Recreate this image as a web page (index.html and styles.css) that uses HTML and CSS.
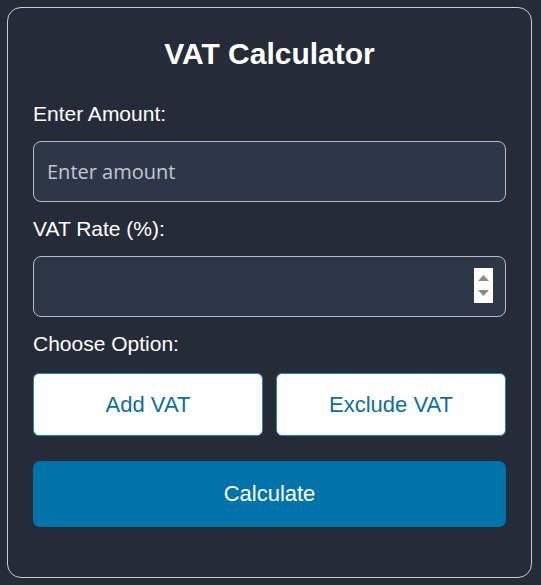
FILE: index.html
```html
<!DOCTYPE html>
<html lang="en">
<head>
<meta charset="utf-8">
<title>VAT Calculator</title>
<link rel="stylesheet" href="styles.css">
</head>
<body>
<div class="card">
  <h1 class="title">VAT Calculator</h1>
  <label class="label" for="amount">Enter Amount:</label>
  <input class="field" id="amount" type="text" placeholder="Enter amount">
  <label class="label" for="rate">VAT Rate (%):</label>
  <div class="field-wrap">
    <input class="field" id="rate" type="text">
    <span class="spinner">
      <svg width="19" height="35" viewBox="0 0 19 35">
        <rect width="19" height="35" fill="#ffffff"/>
        <path d="M4 13 L9.5 7 L15 13 Z" fill="#8a8a8a"/>
        <path d="M4 22 L15 22 L9.5 28 Z" fill="#8a8a8a"/>
      </svg>
    </span>
  </div>
  <div class="label">Choose Option:</div>
  <div class="options">
    <button class="opt">Add VAT</button>
    <button class="opt">Exclude VAT</button>
  </div>
  <button class="calc">Calculate</button>
</div>
</body>
</html>
```
FILE: styles.css
```css
html, body {
  margin: 0;
  padding: 0;
  background: #262b38;
}
body {
  padding: 7px;
  font-family: "Liberation Sans", Arial, sans-serif;
  color: #ffffff;
}
.card {
  box-sizing: border-box;
  width: 525px;
  height: 571px;
  border: 1px solid #c9ccd2;
  border-radius: 14px;
  padding: 29px 25px 25px;
  display: flex;
  flex-direction: column;
}
.title {
  margin: 0 0 31px;
  font-size: 30px;
  font-weight: bold;
  text-align: center;
  line-height: 34px;
}
.label {
  display: block;
  font-size: 21px;
  line-height: 24px;
  margin-bottom: 15px;
}
.field {
  box-sizing: border-box;
  width: 473px;
  height: 61px;
  margin: 0 0 15px;
  border: 1px solid #b8bec8;
  border-radius: 8px;
  background: #2e3748;
  color: #ffffff;
  padding: 0 13px;
  font-family: "Open Sans", "Noto Sans", sans-serif;
  font-size: 20px;
  outline: none;
}
.field::placeholder {
  color: #c3c8d0;
}
.field-wrap {
  position: relative;
  width: 473px;
}
.spinner {
  position: absolute;
  left: 441px;
  top: 12px;
  width: 19px;
  height: 35px;
  display: block;
  line-height: 0;
}
.options {
  display: grid;
  grid-template-columns: 1fr 1fr;
  gap: 13px;
  margin-top: 2px;
  margin-bottom: 25px;
}
.opt {
  height: 63px;
  background: #ffffff;
  border: 1px solid #1b88ad;
  border-radius: 6px;
  color: #0d6e9c;
  font-family: "Liberation Sans", Arial, sans-serif;
  font-size: 22px;
  padding: 0;
}
.calc {
  height: 66px;
  width: 473px;
  background: #0074a8;
  border: none;
  border-radius: 7px;
  color: #ffffff;
  font-family: "Liberation Sans", Arial, sans-serif;
  font-size: 22px;
  padding: 0;
}
```
